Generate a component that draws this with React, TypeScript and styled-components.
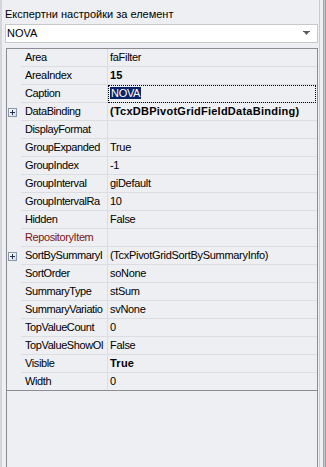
import styled, { createGlobalStyle } from 'styled-components';

type Prop = {
  name: string;
  value: string;
  bold?: boolean;
  expandable?: boolean;
  missing?: boolean;
  focused?: boolean;
};

// names as the narrow column shows them
const props: Prop[] = [
  { name: 'Area', value: 'faFilter' },
  { name: 'AreaIndex', value: '15', bold: true },
  { name: 'Caption', value: 'NOVA', focused: true },
  {
    name: 'DataBinding',
    value: '(TcxDBPivotGridFieldDataBinding)',
    bold: true,
    expandable: true,
  },
  { name: 'DisplayFormat', value: '' },
  { name: 'GroupExpanded', value: 'True' },
  { name: 'GroupIndex', value: '-1' },
  { name: 'GroupInterval', value: 'giDefault' },
  { name: 'GroupIntervalRa', value: '10' },
  { name: 'Hidden', value: 'False' },
  { name: 'RepositoryItem', value: '', missing: true },
  {
    name: 'SortBySummaryI',
    value: '(TcxPivotGridSortBySummaryInfo)',
    expandable: true,
  },
  { name: 'SortOrder', value: 'soNone' },
  { name: 'SummaryType', value: 'stSum' },
  { name: 'SummaryVariatio', value: 'svNone' },
  { name: 'TopValueCount', value: '0' },
  { name: 'TopValueShowOl', value: 'False' },
  { name: 'Visible', value: 'True', bold: true },
  { name: 'Width', value: '0' },
];

const PlusBox = () => (
  <svg width="9" height="9" viewBox="0 0 9 9">
    <defs>
      <linearGradient id="pb" x1="0" y1="0" x2="1" y2="1">
        <stop offset="0" stopColor="#ffffff" />
        <stop offset="1" stopColor="#d6dce4" />
      </linearGradient>
    </defs>
    <rect x="0.5" y="0.5" width="8" height="8" fill="url(#pb)" stroke="#8596ad" />
    <rect x="2" y="4" width="5" height="1" fill="#23324f" />
    <rect x="4" y="2" width="1" height="5" fill="#23324f" />
  </svg>
);

const DropArrow = () => (
  <svg width="7" height="5" viewBox="0 0 7 5">
    <rect x="0" y="0" width="7" height="1" fill="#5a5c60" />
    <polygon points="1,1 6,1 3.5,4" fill="#5a5c60" />
  </svg>
);

const App = () => {
  return (
    <Window>
      <GlobalStyle />
      <Main>
        <Title>Експертни настройки за елемент</Title>
        <Combo>
          <ComboText>NOVA</ComboText>
          <DropArrow />
        </Combo>
        <Grid>
          <Rows>
            {props.map((p) => (
              <Row key={p.name}>
                <Indicator>{p.expandable && <PlusBox />}</Indicator>
                <NameCell $missing={p.missing}>{p.name}</NameCell>
                <ValueCell $bold={p.bold} $focused={p.focused}>
                  {p.focused ? <Selected>{p.value}</Selected> : p.value}
                </ValueCell>
              </Row>
            ))}
          </Rows>
        </Grid>
      </Main>
      <RightEdge />
    </Window>
  );
};

export default App;

const GlobalStyle = createGlobalStyle`
  body {
    margin: 0;
    background: #eeeff2;
    font-family: Tahoma, "Liberation Sans", Arial, sans-serif;
    font-size: 11px;
    color: #000;
  }
`;

const Window = styled.div`
  display: flex;
  width: 326px;
  height: 467px;
  box-sizing: border-box;
  background: #eeeff2;
  border-left: 2px solid #d3d5d8;
  overflow: hidden;
`;

const Main = styled.div`
  flex: 1;
  min-width: 0;
  display: flex;
  flex-direction: column;
  padding-left: 3px;
`;

const RightEdge = styled.div`
  width: 7px;
  background: linear-gradient(
    to right,
    #c9cbce 0 1px,
    #eeeff2 1px 4px,
    #a4a6a9 4px 5px,
    #c3c5c8 5px 6px,
    #9a9c9f 6px 7px
  );
`;

const Title = styled.div`
  padding-top: 6px;
  line-height: 16px;
  white-space: nowrap;
`;

const Combo = styled.div`
  margin-top: 2px;
  width: 313px;
  height: 19px;
  box-sizing: border-box;
  border: 1px solid #c6c8cb;
  background: #fff;
  display: flex;
  align-items: center;
  justify-content: space-between;
  padding: 0 7px 0 1px;
`;

const ComboText = styled.span`
  line-height: 17px;
`;

const Grid = styled.div`
  flex: 1;
  margin: 5px 0 0 1px;
  width: 312px;
  box-sizing: border-box;
  border: 1px solid #8b8d91;
  border-bottom: none;
`;

const Rows = styled.div`
  border-bottom: 1px solid #8b8d91;
`;

const Row = styled.div`
  display: grid;
  grid-template-columns: 14px 87px 1fr;
  height: 18px;

  &:last-child {
    height: 17px;
  }

  &:last-child > div {
    border-bottom: none;
  }
`;

const Indicator = styled.div`
  display: flex;
  align-items: center;
  padding-left: 1px;
`;

const NameCell = styled.div<{ $missing?: boolean }>`
  border-bottom: 1px solid #dcdde0;
  border-right: 1px solid #dcdde0;
  padding-left: 4px;
  line-height: 17px;
  letter-spacing: -0.4px;
  white-space: nowrap;
  overflow: hidden;
  color: ${(p) => (p.$missing ? '#7d1414' : '#000')};
`;

const ValueCell = styled.div<{ $bold?: boolean; $focused?: boolean }>`
  border-bottom: 1px solid #dcdde0;
  padding-left: 2px;
  line-height: 17px;
  white-space: nowrap;
  overflow: hidden;
  font-weight: ${(p) => (p.$bold ? 'bold' : 'normal')};
  letter-spacing: ${(p) => (p.$bold ? '0.25px' : '-0.3px')};
  outline: ${(p) => (p.$focused ? '1px dotted #000' : 'none')};
  outline-offset: -1px;
  margin-right: ${(p) => (p.$focused ? '1px' : '0')};
`;

const Selected = styled.span`
  background: #0a246a;
  color: #fff;
  padding: 0 1px;
`;
